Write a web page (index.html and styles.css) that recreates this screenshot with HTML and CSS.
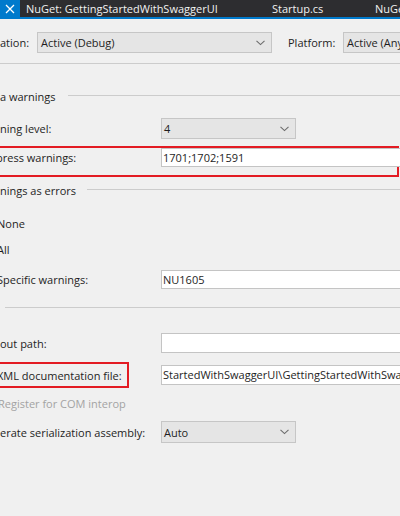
FILE: index.html
```html
<!DOCTYPE html>
<html>
<head>
<meta charset="utf-8">
<link rel="stylesheet" href="styles.css">
</head>
<body>
<div class="tabs">
  <div class="tab tab-close" title="Close">
    <svg width="10" height="10" viewBox="0 0 10 10"><path d="M1 1 L9 9 M9 1 L1 9" stroke="#ffffff" stroke-width="1.3" fill="none"/></svg>
  </div>
  <div class="tab tab-nuget">NuGet: GettingStartedWithSwaggerUI</div>
  <div class="tab tab-startup">Startup.cs</div>
  <div class="tab tab-nuget2">NuGet: GettingStartedWithSwaggerUI</div>
</div>

<div class="config">
  <span class="cfg-label">ation:</span>
  <div class="select sel-config">
    <span>Active (Debug)</span>
    <svg class="chev" width="9" height="6" viewBox="0 0 9 6"><polyline points="0.5,0.8 4.5,4.6 8.5,0.8" fill="none" stroke="#6b6b6b" stroke-width="1.1"/></svg>
  </div>
  <span class="cfg-label plat">Platform:</span>
  <div class="select sel-platform"><span>Active (Any CPU)</span></div>
</div>

<div class="pane">
  <div class="group g1"><span class="gtitle">a warnings</span><span class="gline"></span></div>

  <div class="row r-level">
    <span class="label">ning level:</span>
    <div class="select sel-small">
      <span>4</span>
      <svg class="chev" width="9" height="6" viewBox="0 0 9 6"><polyline points="0.5,0.8 4.5,4.6 8.5,0.8" fill="none" stroke="#6b6b6b" stroke-width="1.1"/></svg>
    </div>
  </div>

  <div class="redbox wide">
    <div class="row r-suppress">
      <span class="label shift">press warnings:</span>
      <div class="input">1701;1702;1591</div>
    </div>
  </div>

  <div class="group g2"><span class="gtitle">nings as errors</span><span class="gline"></span></div>

  <div class="row r-none"><span class="label cut">None</span></div>
  <div class="row r-all"><span class="label cut">All</span></div>
  <div class="row r-specific">
    <span class="label cut">Specific warnings:</span>
    <div class="input">NU1605</div>
  </div>

  <div class="sep"></div>

  <div class="row r-output">
    <span class="label">out path:</span>
    <div class="input"></div>
  </div>

  <div class="row r-xml">
    <div class="redbox narrow"><span class="label cut">XML documentation file:</span></div>
    <div class="input">StartedWithSwaggerUI\GettingStartedWithSwaggerUI.xml</div>
  </div>

  <div class="row r-com"><span class="label cut2 disabled">Register for COM interop</span></div>

  <div class="row r-serial">
    <span class="label">erate serialization assembly:</span>
    <div class="select sel-small tall">
      <span>Auto</span>
      <svg class="chev" width="9" height="6" viewBox="0 0 9 6"><polyline points="0.5,0.8 4.5,4.6 8.5,0.8" fill="none" stroke="#6b6b6b" stroke-width="1.1"/></svg>
    </div>
  </div>
</div>
</body>
</html>
```

FILE: styles.css
```css
html, body {
  margin: 0;
  padding: 0;
}
body {
  width: 400px;
  height: 516px;
  overflow: hidden;
  background: #f0f0f0;
  font-family: "Open Sans", "Noto Sans", sans-serif;
  font-size: 11px;
  color: #1e1e1e;
}

/* tab strip */
.tabs {
  display: flex;
  height: 17px;
  background: #2d2d30;
  border-bottom: 2px solid #007acc;
  white-space: nowrap;
  overflow: hidden;
}
.tab {
  flex: none;
  color: #f1f1f1;
  font-size: 11px;
  line-height: 17px;
  box-sizing: border-box;
  padding-left: 6px;
  overflow: hidden;
}
.tab-close {
  width: 20px;
  padding-left: 0;
  display: flex;
  align-items: center;
  justify-content: center;
  background: #007acc;
}
.tab-nuget { width: 246px; }
.tab-startup { width: 103px; }
.tab-nuget2 { width: 200px; }

/* configuration bar */
.config {
  display: flex;
  align-items: center;
  padding: 13px 0 10px;
  border-bottom: 1px solid #cccccc;
  white-space: nowrap;
}
.cfg-label {
  flex: none;
  width: 37px;
}
.cfg-label.plat {
  width: 55px;
  margin-left: 16px;
}

.select {
  flex: none;
  box-sizing: border-box;
  height: 21px;
  display: flex;
  align-items: center;
  justify-content: space-between;
  background: #e5e5e5;
  border: 1px solid #c6c6c6;
  padding: 0 6px 0 3px;
  white-space: nowrap;
  overflow: hidden;
}
.sel-config { width: 235px; }
.sel-platform { width: 120px; }
.sel-small { width: 135px; padding-left: 2px; }
.select.tall { height: 22px; }
.chev { flex: none; }

/* property pane */
.pane {
  white-space: nowrap;
}
.group {
  display: flex;
  align-items: center;
  height: 16px;
}
.gtitle { flex: none; }
.g1 { margin-top: 24px; }
.g1 .gtitle { width: 68px; }
.g2 { margin-top: 5px; }
.g2 .gtitle { width: 87px; }
.gline {
  flex: 1;
  border-top: 1px solid #cccccc;
  margin-top: -1px;
}

.row {
  display: grid;
  grid-template-columns: 161px 260px;
  align-items: center;
  min-height: 16px;
}
.label.cut { margin-left: -3px; }
.label.cut2 { margin-left: -2px; }
.label.shift { margin-left: -4px; }
.disabled { color: #a3a3a3; }

.input {
  box-sizing: border-box;
  height: 20px;
  line-height: 18px;
  background: #ffffff;
  border: 1px solid #c4c4c4;
  padding-left: 1px;
  overflow: hidden;
  white-space: nowrap;
}

.r-level { margin-top: 14px; }

.redbox {
  border: 2px solid #e31b23;
  box-sizing: border-box;
}
.redbox.wide {
  margin-top: 7px;
  margin-left: -2px;
  width: 401px;
  padding: 0 0 8px 0;
}
.redbox.wide .row { grid-template-columns: 161px 260px; }
.redbox.wide .input { height: 19px; line-height: 17px; }

.redbox.narrow {
  margin-left: -2px;
  width: 131px;
  height: 26px;
  display: flex;
  align-items: center;
  padding-left: 2px;
  border-left: none;
}

.r-none { margin-top: 17px; }
.r-all { margin-top: 10px; }
.r-specific { margin-top: 13px; }
.r-specific .input { height: 19px; line-height: 17px; }

.sep {
  margin-top: 18px;
  margin-left: 5px;
  border-top: 1px solid #cccccc;
}
.r-output { margin-top: 25px; }
.r-xml { margin-top: 9px; }
.r-com { margin-top: 7px; }
.r-serial { margin-top: 10px; }
```
